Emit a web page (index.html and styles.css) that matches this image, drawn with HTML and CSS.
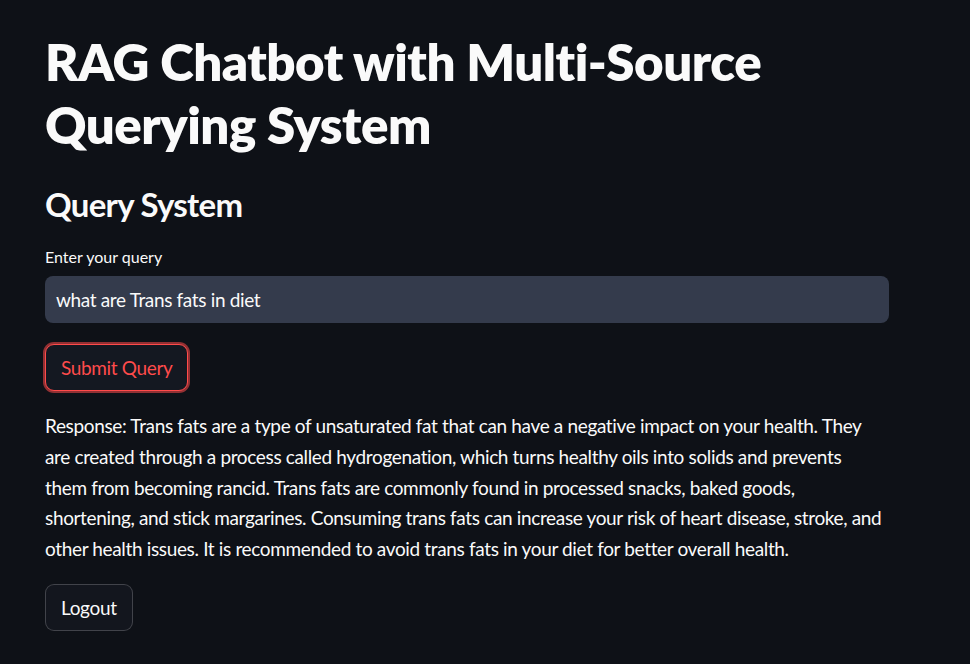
FILE: index.html
```html
<!DOCTYPE html>
<html>
<head>
<meta charset="utf-8">
<link rel="stylesheet" href="styles.css">
</head>
<body>
<main class="main">
  <h1 class="title">RAG Chatbot with Multi-Source Querying System</h1>
  <h2 class="subtitle">Query System</h2>
  <div class="field">
    <label class="label">Enter your query</label>
    <div class="input">what are Trans fats in diet</div>
  </div>
  <div class="btn-row"><button class="btn btn-focus">Submit Query</button></div>
  <p class="response">Response: Trans fats are a type of unsaturated fat that can have a negative impact on your health. They<br>are created through a process called hydrogenation, which turns healthy oils into solids and prevents<br>them from becoming rancid. Trans fats are commonly found in processed snacks, baked goods,<br>shortening, and stick margarines. Consuming trans fats can increase your risk of heart disease, stroke, and<br>other health issues. It is recommended to avoid trans fats in your diet for better overall health.</p>
  <div class="btn-row"><button class="btn">Logout</button></div>
</main>
</body>
</html>
```
FILE: styles.css
```css
html, body {
  margin: 0;
  padding: 0;
  background: #0e1117;
  color: #fafafa;
  font-family: "Lato", "Noto Sans", sans-serif;
  height: 100%;
  overflow: hidden;
}
.main {
  width: 844px;
  padding: 30px 0 0 45px;
}
.title {
  margin: 0;
  font-size: 51px;
  font-weight: 800;
  line-height: 63px;
  letter-spacing: -0.5px;
}
.subtitle {
  margin: 26px 0 0 0;
  font-size: 33px;
  font-weight: 700;
  line-height: 44px;
  letter-spacing: -0.7px;
}
.field {
  margin-top: 21px;
  display: flex;
  flex-direction: column;
}
.label {
  font-size: 16px;
  line-height: 20px;
  margin-bottom: 9px;
}
.input {
  height: 47px;
  box-sizing: border-box;
  background: #343b4c;
  border-radius: 8px;
  padding: 0 11px;
  display: flex;
  align-items: center;
  font-size: 19px;
  letter-spacing: -0.35px;
}
.btn-row {
  display: flex;
}
.btn {
  font-family: inherit;
  font-size: 19px;
  letter-spacing: -0.35px;
  color: #fafafa;
  background: #13161e;
  border: 1px solid rgba(250, 250, 250, 0.2);
  border-radius: 9px;
  height: 47px;
  padding: 0 15px;
  margin: 0;
}
.btn-focus {
  margin-top: 21px;
  color: #ff4b4b;
  border-color: #ff4b4b;
  box-shadow: 0 0 0 2px rgba(255, 75, 75, 0.55);
  background: #141821;
}
.response {
  margin: 20px 0 0 0;
  width: 900px;
  font-size: 19px;
  line-height: 30.8px;
  letter-spacing: -0.35px;
}
.response + .btn-row {
  margin-top: 19px;
}
```
